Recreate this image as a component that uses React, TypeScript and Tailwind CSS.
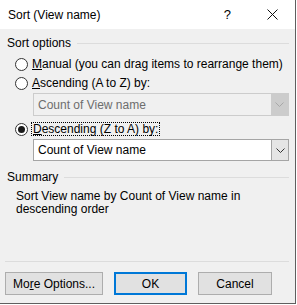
import React from "react";

const font = { fontFamily: '"Liberation Sans", Arial, sans-serif' };

function Radio({ checked }: { checked?: boolean }) {
  return (
    <div className="w-[13px] h-[13px] rounded-full border border-[#333333] bg-white flex items-center justify-center shrink-0">
      {checked && <div className="w-[7px] h-[7px] rounded-full bg-[#1a1a1a]" />}
    </div>
  );
}

function Chevron({ color }: { color: string }) {
  return (
    <svg width="9" height="5" viewBox="0 0 9 5">
      <path d="M0.5 0.5 L4.5 4.5 L8.5 0.5" fill="none" stroke={color} strokeWidth="1" />
    </svg>
  );
}

function GroupHeader({ label }: { label: string }) {
  return (
    <div className="flex items-center h-[16px] pr-[6px]">
      <span className="text-black whitespace-nowrap">{label}</span>
      <div className="flex-1 h-px bg-[#dcdcdc] ml-[6px]" />
    </div>
  );
}

export default function App() {
  return (
    <div className="w-[297px] h-[305px] bg-white text-[12px] leading-[16px]" style={font}>
      <div className="w-[296px] h-[304px] border-r border-b border-[#5f5f5f] flex flex-col">
        <div className="h-[29px] bg-white flex items-center pl-[8px] shrink-0">
          <span className="text-black">Sort (View name)</span>
          <span className="ml-auto mr-[36px] text-[13px] text-black">?</span>
          <svg width="11" height="11" viewBox="0 0 11 11" className="mr-[17px]">
            <path d="M0.5 0.5 L10.5 10.5 M10.5 0.5 L0.5 10.5" stroke="#111" strokeWidth="1" />
          </svg>
        </div>
        <div className="flex-1 bg-[#f0f0f0] flex flex-col pl-[7px]">
          <div className="mt-[6px]">
            <GroupHeader label="Sort options" />
          </div>
          <div className="mt-[5px] ml-[8px] flex items-center gap-[4px] h-[16px]">
            <Radio />
            <span className="text-black whitespace-nowrap"><u>M</u>anual (you can drag items to rearrange them)</span>
          </div>
          <div className="mt-[3px] ml-[8px] flex items-center gap-[4px] h-[16px]">
            <Radio />
            <span className="text-black whitespace-nowrap"><u>A</u>scending (A to Z) by:</span>
          </div>
          <div className="mt-[2px] ml-[26px] mr-[6px] h-[23px] border border-[#cccccc] bg-[#f0f0f0] flex">
            <div className="flex-1 flex items-center pl-[4px] text-[#6d6d6d]">Count of View name</div>
            <div className="w-[17px] bg-[#cccccc] flex items-center justify-center">
              <Chevron color="#a8a8a8" />
            </div>
          </div>
          <div className="mt-[5px] ml-[8px] flex items-center gap-[3px] h-[16px]">
            <Radio checked />
            <span className="text-black whitespace-nowrap border border-dotted border-black px-px leading-[12px]"><u>D</u>escending (Z to A) by:</span>
          </div>
          <div className="mt-[2px] ml-[26px] mr-[6px] h-[22px] border border-[#a5a5a5] bg-white flex">
            <div className="flex-1 flex items-center pl-[4px] text-black">Count of View name</div>
            <div className="w-[17px] bg-[#e5e5e5] border-l border-[#a5a5a5] flex items-center justify-center">
              <Chevron color="#333333" />
            </div>
          </div>
          <div className="mt-[8px]">
            <GroupHeader label="Summary" />
          </div>
          <div className="mt-[5px] ml-[9px] mr-[40px] text-black leading-[13px]">
            Sort View name by Count of View name in descending order
          </div>
          <div className="flex-1" />
          <div className="h-px bg-[#dcdcdc] mr-[6px] -ml-[2px]" />
          <div className="mt-[10px] mb-[8px] flex -ml-[2px]">
            <button className="w-[98px] h-[23px] bg-[#e1e1e1] border border-[#adadad] text-black">
              Mo<u>r</u>e Options...
            </button>
            <button className="ml-[11px] w-[73px] h-[23px] bg-[#e1e1e1] border-2 border-[#0078d7] text-black">
              OK
            </button>
            <button className="ml-[11px] w-[74px] h-[23px] bg-[#e1e1e1] border border-[#adadad] text-black">
              Cancel
            </button>
          </div>
        </div>
      </div>
    </div>
  );
}
